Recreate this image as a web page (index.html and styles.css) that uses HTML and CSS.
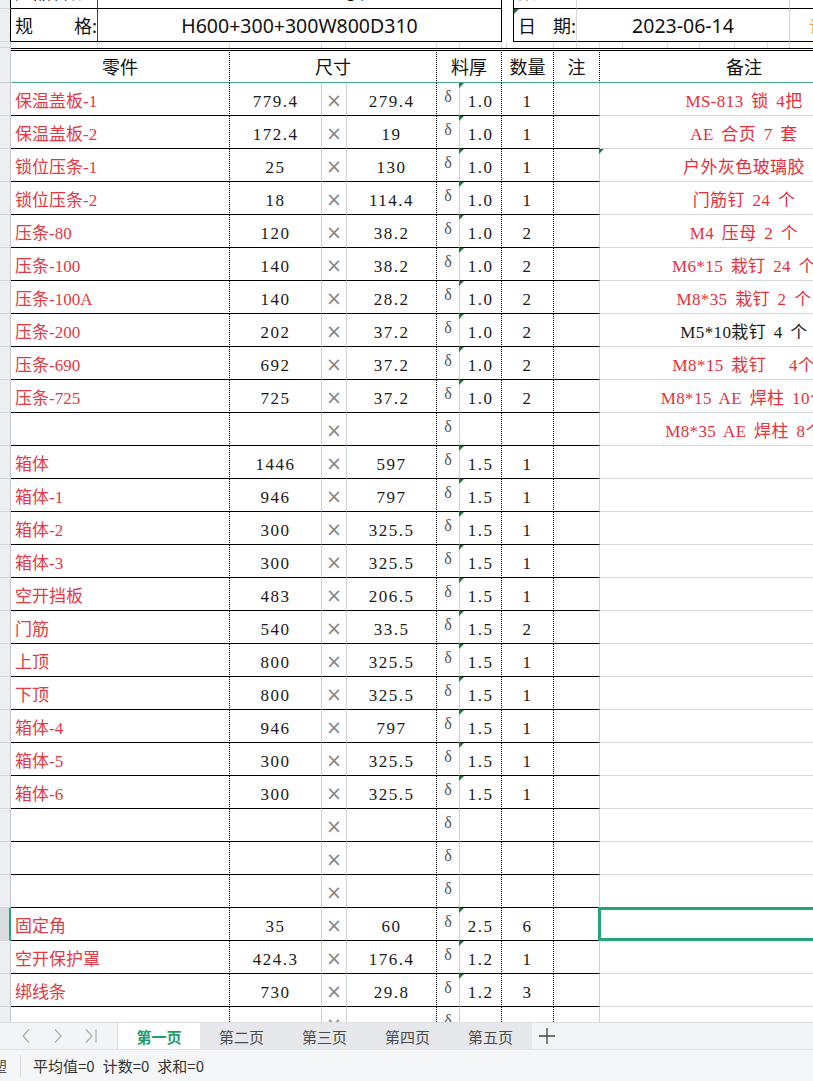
FILE: index.html
```html
<!DOCTYPE html>
<html lang="zh-CN">
<head>
<meta charset="utf-8">
<title>零件清单</title>
<link rel="stylesheet" href="styles.css">
</head>
<body>
<div class="app">
  <div class="sheet">
    <div class="rows">
      <div class="row top part">
        <div class="rh"></div>
        <div class="c lab"><span>产品名称</span></div>
        <div class="c va va-part">1 号柜</div>
        <div class="c gap"></div>
        <div class="c labb"><span>数</span><span>量:</span></div>
        <div class="c vb"></div>
        <div class="c rest"></div>
      </div>
      <div class="row top">
        <div class="rh"></div>
        <div class="c lab"><span>规</span><span>格:</span></div>
        <div class="c va">H600+300+300W800D310</div>
        <div class="c gap"></div>
        <div class="c labb t"><span>日</span><span>期:</span></div>
        <div class="c vb">2023-06-14</div>
        <div class="c rest"><span class="cut">订</span></div>
      </div>
      <div class="row thin">
        <div class="rh"></div>
        <div class="c w87"></div><div class="c w132"></div><div class="c w92"></div><div class="c w24"></div><div class="c w91"></div><div class="c w23"></div><div class="c w42"></div><div class="c w5"></div><div class="c w47"></div><div class="c w23"></div><div class="c w23"></div><div class="c w23"></div><div class="c w45"></div><div class="c w32"></div><div class="c w35"></div><div class="c w33"></div><div class="c w22"></div><div class="c w100"></div>
      </div>
      <div class="row hdr">
        <div class="rh"></div>
        <div class="c h-a">零件</div>
        <div class="c h-b">尺寸</div>
        <div class="c h-e">料厚</div>
        <div class="c h-g">数量</div>
        <div class="c h-h">注</div>
        <div class="c h-i">备注</div>
      </div>

      <div class="row"><div class="rh"></div><div class="c ca">保温盖板-1</div><div class="c cb">779.4</div><div class="c cc">×</div><div class="c cd">279.4</div><div class="c ce">δ</div><div class="c cf t">1.0</div><div class="c cg">1</div><div class="c ch"></div><div class="c ci">MS-813 锁 4把</div></div>
      <div class="row"><div class="rh"></div><div class="c ca">保温盖板-2</div><div class="c cb">172.4</div><div class="c cc">×</div><div class="c cd">19</div><div class="c ce">δ</div><div class="c cf t">1.0</div><div class="c cg">1</div><div class="c ch"></div><div class="c ci">AE 合页 7 套</div></div>
      <div class="row"><div class="rh"></div><div class="c ca">锁位压条-1</div><div class="c cb">25</div><div class="c cc">×</div><div class="c cd">130</div><div class="c ce">δ</div><div class="c cf t">1.0</div><div class="c cg">1</div><div class="c ch"></div><div class="c ci t">户外灰色玻璃胶</div></div>
      <div class="row"><div class="rh"></div><div class="c ca">锁位压条-2</div><div class="c cb">18</div><div class="c cc">×</div><div class="c cd">114.4</div><div class="c ce">δ</div><div class="c cf t">1.0</div><div class="c cg">1</div><div class="c ch"></div><div class="c ci">门筋钉 24 个</div></div>
      <div class="row"><div class="rh"></div><div class="c ca">压条-80</div><div class="c cb">120</div><div class="c cc">×</div><div class="c cd">38.2</div><div class="c ce">δ</div><div class="c cf t">1.0</div><div class="c cg">2</div><div class="c ch"></div><div class="c ci">M4 压母 2 个</div></div>
      <div class="row"><div class="rh"></div><div class="c ca">压条-100</div><div class="c cb">140</div><div class="c cc">×</div><div class="c cd">38.2</div><div class="c ce">δ</div><div class="c cf t">1.0</div><div class="c cg">2</div><div class="c ch"></div><div class="c ci">M6*15 栽钉 24 个</div></div>
      <div class="row"><div class="rh"></div><div class="c ca">压条-100A</div><div class="c cb">140</div><div class="c cc">×</div><div class="c cd">28.2</div><div class="c ce">δ</div><div class="c cf t">1.0</div><div class="c cg">2</div><div class="c ch"></div><div class="c ci">M8*35 栽钉 2 个</div></div>
      <div class="row"><div class="rh"></div><div class="c ca">压条-200</div><div class="c cb">202</div><div class="c cc">×</div><div class="c cd">37.2</div><div class="c ce">δ</div><div class="c cf t">1.0</div><div class="c cg">2</div><div class="c ch"></div><div class="c ci k">M5*10栽钉 4 个</div></div>
      <div class="row"><div class="rh"></div><div class="c ca">压条-690</div><div class="c cb">692</div><div class="c cc">×</div><div class="c cd">37.2</div><div class="c ce">δ</div><div class="c cf t">1.0</div><div class="c cg">2</div><div class="c ch"></div><div class="c ci">M8*15 栽钉   4个</div></div>
      <div class="row"><div class="rh"></div><div class="c ca">压条-725</div><div class="c cb">725</div><div class="c cc">×</div><div class="c cd">37.2</div><div class="c ce">δ</div><div class="c cf t">1.0</div><div class="c cg">2</div><div class="c ch"></div><div class="c ci">M8*15 AE 焊柱 10个</div></div>
      <div class="row"><div class="rh"></div><div class="c ca"></div><div class="c cb"></div><div class="c cc">×</div><div class="c cd"></div><div class="c ce">δ</div><div class="c cf"></div><div class="c cg"></div><div class="c ch"></div><div class="c ci">M8*35 AE 焊柱 8个</div></div>
      <div class="row"><div class="rh"></div><div class="c ca">箱体</div><div class="c cb">1446</div><div class="c cc">×</div><div class="c cd">597</div><div class="c ce">δ</div><div class="c cf t">1.5</div><div class="c cg">1</div><div class="c ch"></div><div class="c ci"></div></div>
      <div class="row"><div class="rh"></div><div class="c ca">箱体-1</div><div class="c cb">946</div><div class="c cc">×</div><div class="c cd">797</div><div class="c ce">δ</div><div class="c cf t">1.5</div><div class="c cg">1</div><div class="c ch"></div><div class="c ci"></div></div>
      <div class="row"><div class="rh"></div><div class="c ca">箱体-2</div><div class="c cb">300</div><div class="c cc">×</div><div class="c cd">325.5</div><div class="c ce">δ</div><div class="c cf t">1.5</div><div class="c cg">1</div><div class="c ch"></div><div class="c ci"></div></div>
      <div class="row"><div class="rh"></div><div class="c ca">箱体-3</div><div class="c cb">300</div><div class="c cc">×</div><div class="c cd">325.5</div><div class="c ce">δ</div><div class="c cf t">1.5</div><div class="c cg">1</div><div class="c ch"></div><div class="c ci"></div></div>
      <div class="row"><div class="rh"></div><div class="c ca">空开挡板</div><div class="c cb">483</div><div class="c cc">×</div><div class="c cd">206.5</div><div class="c ce">δ</div><div class="c cf t">1.5</div><div class="c cg">1</div><div class="c ch"></div><div class="c ci"></div></div>
      <div class="row"><div class="rh"></div><div class="c ca">门筋</div><div class="c cb">540</div><div class="c cc">×</div><div class="c cd">33.5</div><div class="c ce">δ</div><div class="c cf t">1.5</div><div class="c cg">2</div><div class="c ch"></div><div class="c ci"></div></div>
      <div class="row"><div class="rh"></div><div class="c ca">上顶</div><div class="c cb">800</div><div class="c cc">×</div><div class="c cd">325.5</div><div class="c ce">δ</div><div class="c cf t">1.5</div><div class="c cg">1</div><div class="c ch"></div><div class="c ci"></div></div>
      <div class="row"><div class="rh"></div><div class="c ca">下顶</div><div class="c cb">800</div><div class="c cc">×</div><div class="c cd">325.5</div><div class="c ce">δ</div><div class="c cf t">1.5</div><div class="c cg">1</div><div class="c ch"></div><div class="c ci"></div></div>
      <div class="row"><div class="rh"></div><div class="c ca">箱体-4</div><div class="c cb">946</div><div class="c cc">×</div><div class="c cd">797</div><div class="c ce">δ</div><div class="c cf t">1.5</div><div class="c cg">1</div><div class="c ch"></div><div class="c ci"></div></div>
      <div class="row"><div class="rh"></div><div class="c ca">箱体-5</div><div class="c cb">300</div><div class="c cc">×</div><div class="c cd">325.5</div><div class="c ce">δ</div><div class="c cf t">1.5</div><div class="c cg">1</div><div class="c ch"></div><div class="c ci"></div></div>
      <div class="row"><div class="rh"></div><div class="c ca">箱体-6</div><div class="c cb">300</div><div class="c cc">×</div><div class="c cd">325.5</div><div class="c ce">δ</div><div class="c cf t">1.5</div><div class="c cg">1</div><div class="c ch"></div><div class="c ci"></div></div>
      <div class="row"><div class="rh"></div><div class="c ca"></div><div class="c cb"></div><div class="c cc">×</div><div class="c cd"></div><div class="c ce">δ</div><div class="c cf"></div><div class="c cg"></div><div class="c ch"></div><div class="c ci"></div></div>
      <div class="row"><div class="rh"></div><div class="c ca"></div><div class="c cb"></div><div class="c cc">×</div><div class="c cd"></div><div class="c ce">δ</div><div class="c cf"></div><div class="c cg"></div><div class="c ch"></div><div class="c ci"></div></div>
      <div class="row"><div class="rh"></div><div class="c ca"></div><div class="c cb"></div><div class="c cc">×</div><div class="c cd"></div><div class="c ce">δ</div><div class="c cf"></div><div class="c cg"></div><div class="c ch"></div><div class="c ci"></div></div>
      <div class="row"><div class="rh rsel"></div><div class="c ca">固定角</div><div class="c cb">35</div><div class="c cc">×</div><div class="c cd">60</div><div class="c ce">δ</div><div class="c cf t">2.5</div><div class="c cg">6</div><div class="c ch"></div><div class="c ci sel"></div></div>
      <div class="row"><div class="rh"></div><div class="c ca">空开保护罩</div><div class="c cb">424.3</div><div class="c cc">×</div><div class="c cd">176.4</div><div class="c ce">δ</div><div class="c cf t">1.2</div><div class="c cg">1</div><div class="c ch"></div><div class="c ci"></div></div>
      <div class="row"><div class="rh"></div><div class="c ca">绑线条</div><div class="c cb">730</div><div class="c cc">×</div><div class="c cd">29.8</div><div class="c ce">δ</div><div class="c cf t">1.2</div><div class="c cg">3</div><div class="c ch"></div><div class="c ci"></div></div>
      <div class="row"><div class="rh"></div><div class="c ca"></div><div class="c cb"></div><div class="c cc">×</div><div class="c cd"></div><div class="c ce">δ</div><div class="c cf"></div><div class="c cg"></div><div class="c ch"></div><div class="c ci"></div></div>
    </div>
  </div>

  <div class="tabbar">
    <div class="nav">
      <svg class="ico" width="12" height="16" viewBox="0 0 12 16"><path d="M9 1.5 L3 8 L9 14.5" fill="none" stroke="#a9acb2" stroke-width="1.2"/></svg>
      <svg class="ico" width="12" height="16" viewBox="0 0 12 16"><path d="M3 1.5 L9 8 L3 14.5" fill="none" stroke="#a9acb2" stroke-width="1.2"/></svg>
      <svg class="ico" width="14" height="16" viewBox="0 0 14 16"><path d="M2 1.5 L8 8 L2 14.5 M12 1.5 V14.5" fill="none" stroke="#a9acb2" stroke-width="1.2"/></svg>
    </div>
    <div class="tabs">
      <div class="tab active">第一页</div>
      <div class="tab">第二页</div>
      <div class="tab">第三页</div>
      <div class="tab">第四页</div>
      <div class="tab">第五页</div>
    </div>
    <div class="add">
      <svg width="16" height="16" viewBox="0 0 16 16"><path d="M8 0 V16 M0 8 H16" fill="none" stroke="#444" stroke-width="1.3"/></svg>
    </div>
  </div>

  <div class="status">
    <span class="scut">塑</span>
    <span class="sep"></span>
    <span class="stat">平均值=0</span>
    <span class="stat">计数=0</span>
    <span class="stat">求和=0</span>
  </div>
</div>
</body>
</html>
```

FILE: styles.css
```css
* { box-sizing: border-box; }
html, body { margin: 0; padding: 0; }
body {
  width: 813px;
  height: 1081px;
  overflow: hidden;
  background: #fff;
  font-family: "Liberation Serif", "Noto Sans CJK SC", serif;
  color: #1a1a1a;
}
.app { display: flex; flex-direction: column; height: 1081px; }
.sheet { height: 1022px; flex: none; overflow: hidden; position: relative; }
.rows { margin-top: -24px; width: 920px; }
.row { display: flex; height: 33px; }
.rh {
  width: 11px; flex: none; height: 100%;
  background: #eceef1;
  border-right: 1px solid #c5c8ce;
  border-bottom: 1px solid #d4d6db;
}
.c {
  flex: none; height: 100%;
  display: flex; align-items: center; justify-content: center;
  white-space: pre; position: relative;
  font-size: 17px;
}

/* top info boxes */
.top .rh { border-right-color: #000; }
.part .c { padding-bottom: 3px; }
.lab {
  width: 87px; padding-left: 4px;
  justify-content: space-between;
  border-right: 1px solid #444; border-bottom: 1px solid #000;
  font-family: "Noto Sans CJK SC", sans-serif; font-size: 18px; color: #111;
}
.va {
  width: 404px;
  border-right: 1px solid #000; border-bottom: 1px solid #000;
  font-family: "Noto Sans", "Noto Sans CJK SC", sans-serif; font-size: 19.5px; color: #111;
}
.va-part { justify-content: flex-start; padding-left: 228px; font-family: "Noto Sans CJK SC", sans-serif; font-size: 18px; }
.gap { width: 11px; }
.labb {
  width: 64px; padding-left: 4px;
  justify-content: space-between;
  border-left: 1px solid #000; border-right: 1px solid #d6d6d6; border-bottom: 1px solid #000;
  font-family: "Noto Sans CJK SC", sans-serif; font-size: 18px; color: #111;
  overflow: hidden;
}
.vb {
  width: 213px;
  border-right: 1px solid #d4d4d4; border-bottom: 1px solid #000;
  font-family: "Noto Sans", "Noto Sans CJK SC", sans-serif; font-size: 19.5px; color: #111;
}
.rest { width: 130px; border-bottom: 1px solid #000; justify-content: flex-start; padding-left: 19px; }
.cut { color: #e8a040; font-family: "Noto Sans CJK SC", sans-serif; font-size: 16px; }

/* thin spacer row */
.thin { height: 6px; }
.thin .c { border-right: 1px solid #d9d9d9; }
.w5 { width: 5px; } .w22 { width: 22px; } .w23 { width: 23px; } .w24 { width: 24px; }
.w32 { width: 32px; } .w33 { width: 33px; } .w35 { width: 35px; } .w42 { width: 42px; }
.w45 { width: 45px; } .w47 { width: 47px; } .w87 { width: 87px; } .w91 { width: 91px; }
.w92 { width: 92px; } .w100 { width: 100px; } .w132 { width: 132px; }

/* header row */
.hdr { height: 35px; }
.hdr .c {
  border-top: 3px double #000;
  border-bottom: 1px solid #45b08c;
  border-right: 1px dotted #000;
  padding-bottom: 2px;
  font-family: "Noto Sans CJK SC", sans-serif; font-size: 18px; color: #111;
}
.hdr .rh { border-bottom-color: #c9ccd1; }
.h-a { width: 219px; }
.h-b { width: 207px; }
.h-e { width: 65px; }
.h-g { width: 52px; }
.h-h { width: 46px; }
.hdr .h-i { width: 288px; border-right: none; }

/* data cells */
.ca, .cb, .cc, .cd, .ce, .cf, .cg, .ch { border-bottom: 1px solid #000; }
.ca { width: 219px; border-right: 1px dotted #000; justify-content: flex-start; padding-left: 4px; color: #e23a45; }
.cb, .cd, .cf, .cg { padding-top: 5px; letter-spacing: 1.5px; }
.cb { width: 92px; border-right: 1px solid #cfd1d6; }
.cc { width: 25px; border-right: 1px solid #cfd1d6; color: #858585; font-family: "DejaVu Sans", sans-serif; font-size: 19px; padding-top: 2px; }
.cd { width: 90px; border-right: 1px dotted #000; }
.ce { width: 23px; border-right: 1px solid #cfd1d6; color: #555; font-size: 16px; padding-bottom: 4px; }
.cf { width: 42px; border-right: 1px dotted #000; }
.cg { width: 52px; border-right: 1px dotted #000; }
.ch { width: 46px; border-right: 1px solid #cfd1d6; }
.ci { width: 288px; border-bottom: 1px solid #d6d7db; color: #e5303c; word-spacing: 3px; letter-spacing: 0.4px; padding-top: 1px; }
.ci.k { color: #1a1a1a; }

/* number-stored-as-text marker */
.t::before {
  content: ""; position: absolute; top: 0; left: -1px;
  border-top: 5px solid #1f7a3a; border-right: 5px solid transparent;
}
.labb.t::before { left: 0; }

/* selection */
.rh.rsel { background: #d9dbe0; border-right: 2px solid #21a675; }
.sel::after {
  content: ""; position: absolute;
  top: -1px; left: -2px; right: -10px; bottom: -1px;
  border: 3px solid #23a677;
}

/* sheet tabs */
.tabbar {
  height: 28px; flex: none; display: flex;
  background: #f3f4f6;
  border-top: 1px solid #dcdde1;
  border-bottom: 1px solid #e1e2e6;
}
.nav {
  width: 118px; flex: none;
  display: flex; align-items: center;
  padding-left: 20px; gap: 20px;
  border-right: 1px solid #dcdde1;
}
.tabs { display: flex; background: #e6e8ec; }
.tab {
  width: 83px; display: flex; align-items: center; justify-content: center;
  font-family: "Noto Sans CJK SC", sans-serif; font-size: 15px; color: #4a4a4a;
}
.tab.active { width: 82px; background: #fff; color: #1e9d6b; font-weight: bold; }
.add { display: flex; align-items: center; padding-left: 7px; }

/* status bar */
.status {
  height: 31px; flex: none;
  display: flex; align-items: center;
  background: #f5f6f8;
  font-family: "Noto Sans CJK SC", sans-serif; font-size: 15px; color: #333;
}
.scut { margin-left: -8px; width: 18px; flex: none; color: #555; }
.sep { width: 1px; height: 22px; background: #d8d9dd; margin-left: 10px; margin-right: 12px; }
.stat { margin-right: 8px; }
```
